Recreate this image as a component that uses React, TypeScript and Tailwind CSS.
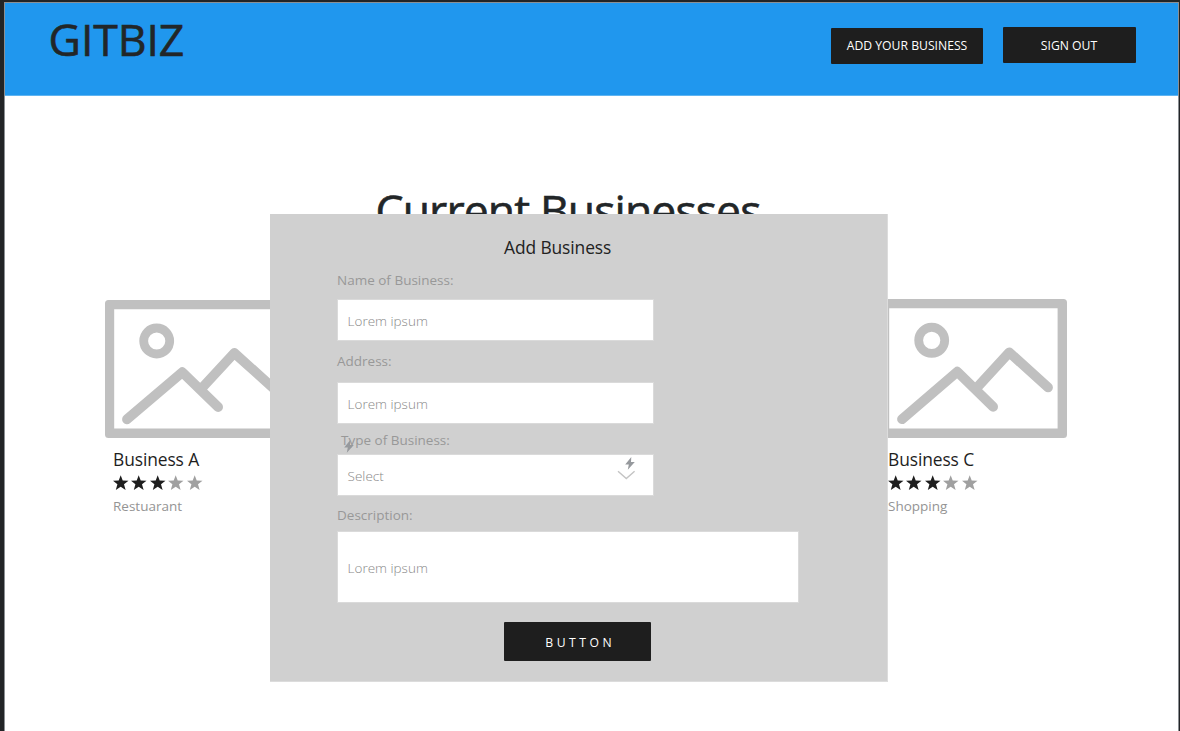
import type { ReactNode } from 'react';

function Placeholder({ className }: { className: string }) {
  return (
    <svg className={className} viewBox="0 0 187 138" preserveAspectRatio="none" fill="none" stroke="#c0c0c0">
      <rect x="4.6" y="4.6" width="177.6" height="128.6" rx="0.5" strokeWidth="9.2" strokeLinejoin="round" />
      <rect x="1.5" y="1.5" width="184" height="135" rx="2" strokeWidth="3" />
      <circle cx="51.7" cy="41" r="13" strokeWidth="8.8" />
      <path d="M22 119.3 77.3 72.2 113.1 107" strokeWidth="9.8" strokeLinecap="round" strokeLinejoin="round" />
      <path d="M96.5 88.5 129.3 53 168 87.8" strokeWidth="9.8" strokeLinecap="round" strokeLinejoin="round" />
    </svg>
  );
}

function Star({ filled }: { filled: boolean }) {
  return (
    <svg className="h-[15px] w-4" viewBox="0 0 16 15" fill={filled ? '#1e1e1e' : '#a0a0a0'}>
      <path d="M7.7 0.3 9.7 5.5 15.5 5.7 11 9.3 12.6 14.9 7.7 11.7 2.8 14.9 4.4 9.3 -0.1 5.7 5.7 5.5Z" />
    </svg>
  );
}

function Card({ name, kind, imageClass }: { name: string; kind: string; imageClass: string }) {
  return (
    <article className="w-[187px]">
      <Placeholder className={imageClass} />
      <div className="pl-2">
        <h2 className="mt-[9px] h-6 text-[17.4px] leading-6 tracking-[-0.1px] text-[#1e1e1e]">{name}</h2>
        <div className="mt-[4px] flex gap-[2.4px]">
          {[1, 2, 3, 4, 5].map((n) => (
            <Star key={n} filled={n <= 3} />
          ))}
        </div>
        <p className="mt-[6px] text-[13.5px] leading-5 text-[#949494]">{kind}</p>
      </div>
    </article>
  );
}

function Label({ className, children }: { className: string; children: ReactNode }) {
  return <div className={`h-5 text-[13.5px] leading-5 text-[#989898] ${className}`}>{children}</div>;
}

function Field({ className, children }: { className: string; children: ReactNode }) {
  return (
    <div
      className={`relative flex items-center border border-[#dadada] bg-white pl-[9.6px] text-[13.5px] font-light leading-5 text-[#888888] ${className}`}
    >
      {children}
    </div>
  );
}

function Bolt({ className }: { className: string }) {
  return (
    <svg className={className} viewBox="0 0 10 13" fill="#96999d">
      <path d="M6.3 0 0.2 7.4H3.8L2.8 12.8 9.8 5.1H6Z" />
    </svg>
  );
}

export default function App() {
  return (
    <div className="h-[731px] w-[1180px] overflow-hidden bg-[#222426] pl-1 pt-[2px] font-['Open_Sans',sans-serif]">
      <div className="relative h-[729px] w-[1175px] border-x border-t border-[#8b8f93] bg-white">
        <header className="flex h-[93px] items-start border-b border-[#5fb4f1] bg-[#2097ee] pl-[43.6px]">
          <h1 className="mt-[6px] h-[60px] text-[44.6px] leading-[60px] tracking-[-0.1px] text-[#222628] [-webkit-text-stroke:0.6px_#222628]">
            GITBIZ
          </h1>
          <div className="ml-auto mr-[42.5px] flex gap-[19.5px] text-[12.2px] text-white">
            <button className="mt-[25px] h-9 w-[152px] rounded-[1px] bg-[#1e1e1e] pt-px">ADD YOUR BUSINESS</button>
            <button className="mt-6 h-9 w-[133px] rounded-[1px] bg-[#1e1e1e] pt-[2px]">SIGN OUT</button>
          </div>
        </header>

        <main>
          <h1 className="ml-[370.5px] mt-[84px] h-[60px] text-[44.6px] leading-[60px] tracking-[-0.92px] text-[#222628] [-webkit-text-stroke:0.6px_#222628]">
            Current Businesses
          </h1>
          <section className="ml-[100px] mr-[111px] mt-[59px] flex justify-between">
            <Card name="Business A" kind="Restuarant" imageClass="mt-px block h-[138px] w-[187px]" />
            <Card name="Business C" kind="Shopping" imageClass="block h-[139px] w-[187px]" />
          </section>
        </main>

        <div
          role="dialog"
          className="absolute left-[265px] top-[211px] flex h-[468px] w-[618px] flex-col items-start border-b border-r border-[#dcdcdc] bg-[#d0d0d0] pl-[67px]"
        >
          <h2 className="ml-[167px] mt-[21px] h-6 text-[17.4px] leading-6 tracking-[-0.1px] text-[#222222]">
            Add Business
          </h2>
          <Label className="mt-[11px]">Name of Business:</Label>
          <Field className="mt-[9px] h-[42px] w-[316.5px] pt-px">Lorem ipsum</Field>
          <Label className="mt-[10px]">Address:</Label>
          <Field className="mt-[11px] h-[42px] w-[317px] pt-px">Lorem ipsum</Field>
          <Label className="relative ml-1 mt-[6px]">
            Type of Business:
            <Bolt className="absolute left-[3px] top-[10px] h-[13px] w-[10px]" />
          </Label>
          <Field className="mt-[4px] h-[42px] w-[317px] pt-[2px]">
            Select
            <Bolt className="absolute right-[18.5px] top-[2px] h-[13px] w-[10px]" />
            <svg
              className="absolute right-[17px] top-[15px] h-[10px] w-[19px]"
              viewBox="0 0 19 10"
              fill="none"
              stroke="#c4c4c4"
              strokeWidth="1.4"
            >
              <path d="M1 1.2 9.3 8.6 17.6 1.2" />
            </svg>
          </Field>
          <Label className="mt-[9px]">Description:</Label>
          <Field className="mt-[6px] h-[72px] w-[462px] pt-px">Lorem ipsum</Field>
          <button className="ml-[167.4px] mt-[19px] h-[39px] w-[146.6px] rounded-[1px] bg-[#1e1e1e] pl-[5px] pt-[3px] text-[12.2px] tracking-[3.5px] text-white">
            BUTTON
          </button>
        </div>
      </div>
    </div>
  );
}
